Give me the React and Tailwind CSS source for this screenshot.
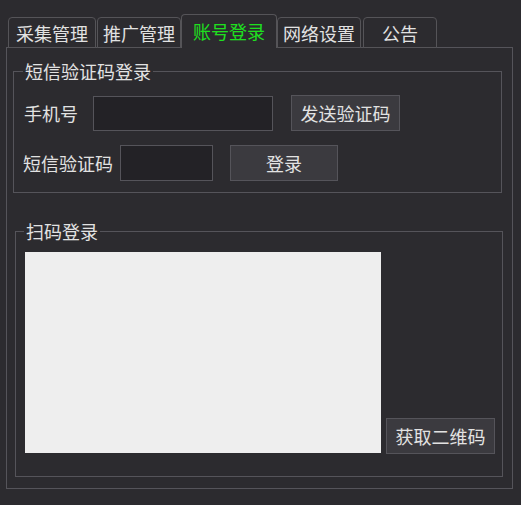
import React from "react";

const font = { fontFamily: '"Noto Sans CJK SC", "Noto Sans", sans-serif' };

function Tab({ label, w, ml, selected }) {
  return (
    <div
      className={
        "flex items-center justify-center rounded-t-[4px] border border-[#555458] text-[18px] leading-none " +
        (selected
          ? "h-[34px] border-b-0 bg-[#2c2b2f] text-[#1fe01f] relative z-10"
          : "h-[31px] bg-[#2c2b2f] text-[#e2e2e2]")
      }
      style={{ width: w, marginLeft: ml }}
    >
      <span className={selected ? "-mt-[2px]" : "mt-[1px]"}>{label}</span>
    </div>
  );
}

function Btn({ children, w }) {
  return (
    <div
      className="flex items-center justify-center h-[36px] bg-[#3b3a3f] border border-[#55545a] text-[18px] leading-none text-[#e2e2e2]"
      style={{ width: w }}
    >
      {children}
    </div>
  );
}

export default function App() {
  return (
    <div className="w-[521px] h-[505px] bg-[#2c2b2f] overflow-hidden" style={font}>
      <div className="flex items-end pt-[15px] pl-[8px] h-[48px]">
        <Tab label="采集管理" w={88} ml={0} />
        <Tab label="推广管理" w={84} ml={1} />
        <Tab label="账号登录" w={96} ml={0} selected />
        <Tab label="网络设置" w={84} ml={0} />
        <Tab label="公告" w={74} ml={2} />
      </div>
      <div className="-mt-[1px] ml-[6px] w-[507px] h-[442px] border border-[#55545a] px-[6px] pt-[23px]">
        {/* group 1 */}
        <div className="relative w-[489px] h-[122px] border border-[#55545a] pt-[23px]">
          <div className="absolute -top-[12px] left-[9px] px-[2px] bg-[#2c2b2f] text-[18px] leading-[22px] text-[#e2e2e2]">
            短信验证码登录
          </div>
          <div className="flex items-center">
            <span className="ml-[10px] text-[18px] leading-none text-[#e2e2e2]">手机号</span>
            <div className="ml-[15px] w-[180px] h-[35px] bg-[#232226] border border-[#55545a]" />
            <div className="ml-[18px]">
              <Btn w={109}>发送验证码</Btn>
            </div>
          </div>
          <div className="flex items-center mt-[14px]">
            <span className="ml-[9px] text-[18px] leading-none text-[#e2e2e2]">短信验证码</span>
            <div className="ml-[7px] w-[93px] h-[36px] bg-[#232226] border border-[#55545a]" />
            <div className="ml-[17px]">
              <Btn w={108}>登录</Btn>
            </div>
          </div>
        </div>
        {/* group 2 */}
        <div className="relative mt-[38px] ml-[2px] w-[488px] h-[246px] border border-[#55545a] pt-[20px]">
          <div className="absolute -top-[12px] left-[8px] px-[2px] bg-[#2c2b2f] text-[18px] leading-[22px] text-[#e2e2e2]">
            扫码登录
          </div>
          <div className="flex items-end ml-[9px]">
            <div className="w-[356px] h-[201px] bg-[#eeeeee]" />
            <div className="ml-[5px] mb-[-1px]">
              <Btn w={109}>获取二维码</Btn>
            </div>
          </div>
        </div>
      </div>
    </div>
  );
}
